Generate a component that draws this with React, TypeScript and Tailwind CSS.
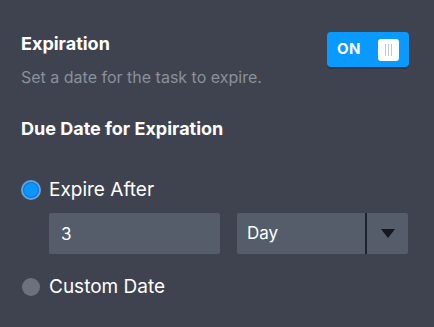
const Toggle = () => (
  <button
    type="button"
    className="flex items-center justify-between w-[82px] h-[35px] rounded-[4px] bg-[#0a99ff] pl-[10px] pr-[10px] shadow-[0_2px_0_rgba(0,0,0,0.18)]"
  >
    <span className="text-[15px] font-bold text-white tracking-[0.5px]">ON</span>
    <span className="flex items-center justify-center gap-[2px] w-[21px] h-[22px] rounded-[3px] bg-white">
      <span className="w-px h-[12px] bg-[#b9c7e6]" />
      <span className="w-px h-[12px] bg-[#b9c7e6]" />
      <span className="w-px h-[12px] bg-[#b9c7e6]" />
    </span>
  </button>
);

const Radio = ({ checked, label }: { checked?: boolean; label: string }) => (
  <label className="flex items-center gap-[8px] h-[24px]">
    {checked ? (
      <span className="flex items-center justify-center w-[20px] h-[20px] rounded-full bg-[#1c6fc4] border-[2px] border-[#5aa6e8]">
        <span className="w-[14px] h-[14px] rounded-full bg-[#0a96ff]" />
      </span>
    ) : (
      <span className="w-[18px] h-[18px] mx-px rounded-full bg-[#6d717d]" />
    )}
    <span className="text-[19px] leading-[24px] text-white">{label}</span>
  </label>
);

export default function App() {
  return (
    <div
      className="w-[434px] h-[327px] bg-[#3f4350] px-[21px] pt-[32px]"
      style={{ fontFamily: 'Inter, "Noto Sans", sans-serif' }}
    >
      <div className="flex items-start justify-between">
        <div>
          <h2 className="text-[18px] leading-[24px] font-bold text-white">Expiration</h2>
          <p className="mt-[11px] text-[16px] leading-[20px] text-[#8b909b]">
            Set a date for the task to expire.
          </p>
        </div>
        <div className="mr-[4px]">
          <Toggle />
        </div>
      </div>

      <h3 className="mt-[30px] text-[18px] leading-[24px] font-bold text-white">Due Date for Expiration</h3>

      <div className="mt-[37px]">
        <Radio checked label="Expire After" />
      </div>

      <div className="flex gap-[17px] mt-[11px] pl-[28px]">
        <input
          defaultValue="3"
          className="w-[171px] h-[41px] rounded-[2px] bg-[#555d6b] px-[12px] text-[17px] text-white outline-none"
        />
        <div className="flex w-[171px] h-[41px] rounded-[2px] bg-[#555d6b]">
          <span className="flex-1 flex items-center px-[10px] text-[17px] text-white border-r-[2px] border-[#1e2330]">
            Day
          </span>
          <span className="flex items-center justify-center w-[41px]">
            <svg width="14" height="9" viewBox="0 0 14 9">
              <path d="M0 0h14L7 9z" fill="#15181f" />
            </svg>
          </span>
        </div>
      </div>

      <div className="mt-[21px]">
        <Radio label="Custom Date" />
      </div>
    </div>
  );
}
